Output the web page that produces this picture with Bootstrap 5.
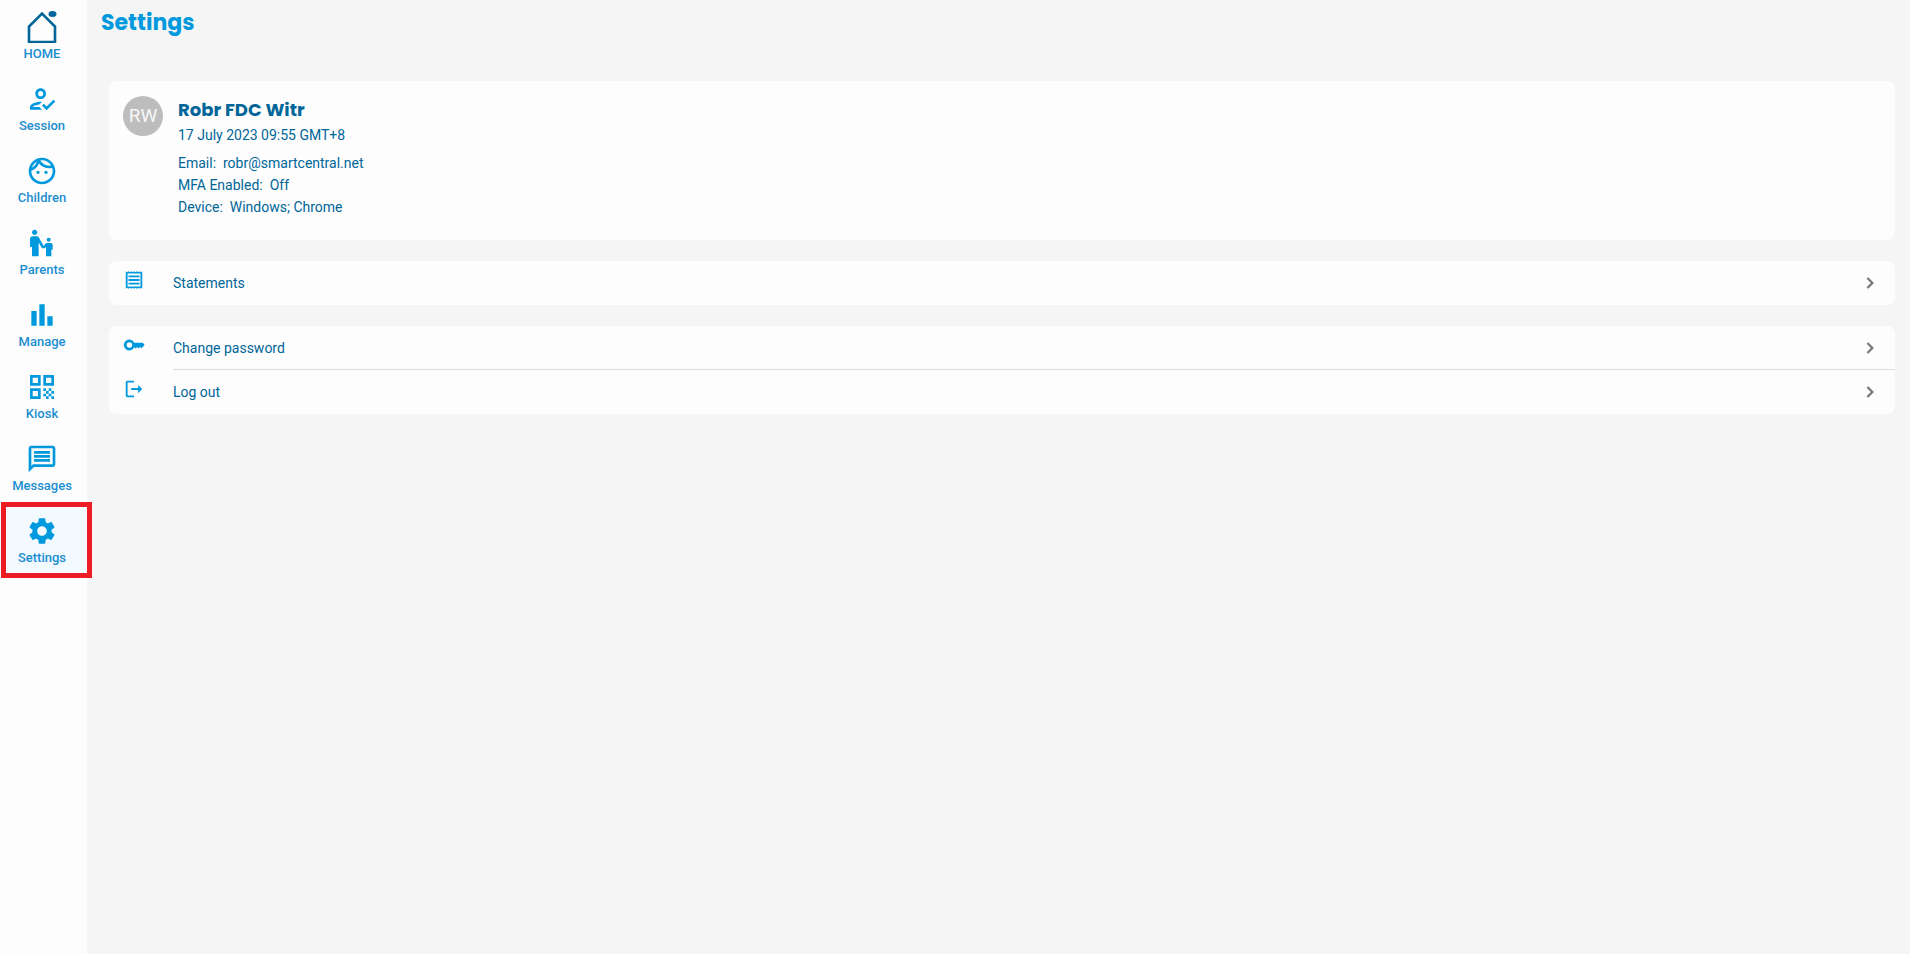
<!DOCTYPE html>
<html lang="en">
<head>
<meta charset="utf-8">
<meta name="viewport" content="width=device-width, initial-scale=1">
<title>Settings</title>
<link href="https://cdn.jsdelivr.net/npm/bootstrap@5.3.0/dist/css/bootstrap.min.css" rel="stylesheet">
<style>
  :root { --brand: #0099dd; --brand-dark: #006699; --link: #1a8ed1; --surface: #fdfdfd; }
  body { background: #f5f5f5; color: var(--brand-dark); font-family: Roboto, "Liberation Sans", sans-serif; font-size: 14px; line-height: 22px; }
  .side-rail { width: 87px; background: var(--surface); }
  .rail-link { height: 72px; padding: 11px 3px 0 0; gap: 3px; color: var(--link); font-size: 13px; font-weight: 500; line-height: 16px; text-decoration: none; }
  .rail-link svg { width: 32px; height: 32px; fill: var(--brand); }
  .rail-link.active { background: #f2f9ff; }
  .active-frame { position: absolute; inset: -2px -5px -2px 1px; border: 5px solid #ed1c24; pointer-events: none; }
  .title-font { font-family: Poppins, Inter, sans-serif; font-weight: 700; }
  .page-title { color: var(--brand); font-size: 22px; line-height: 28px; padding: 9px 14px 0; }
  .page-body { padding: 44px 15px 24px 22px; gap: 21px; }
  .panel { background: var(--surface); border-radius: 8px; }
  .profile { padding: 15px 14px 22px; gap: 15px; }
  .avatar { width: 40px; height: 40px; background: #bdbdbd; color: #f7f7f7; font-size: 19px; }
  .profile-name { font-size: 18px; line-height: 28px; }
  .profile-date { margin-bottom: 6px; }
  .row-link { height: 44px; padding-left: 14px; color: var(--brand-dark); text-decoration: none; }
  .row-link .lead-icon { width: 22px; height: 22px; margin: 8px 28px 0 0; fill: var(--brand); }
  .row-label { padding-right: 14px; }
  .row-label .chevron { width: 22px; height: 22px; fill: #757575; stroke: #757575; stroke-width: .5; }
  .row-divided { border-bottom: 1px solid #dcdcdc; }
</style>
</head>
<body>
<div class="d-flex min-vh-100">
  <nav class="side-rail flex-shrink-0 d-flex flex-column" aria-label="Main">
    <a class="rail-link d-flex flex-column align-items-center" href="#"><svg viewBox="0 0 32 32" aria-hidden="true"><path d="M3 31V15.500L16 2.500l13 13V31z" fill="none" stroke="#006699" stroke-width="2.600"/><ellipse cx="26.500" cy="3" rx="4" ry="3" fill="#006699"/></svg>HOME</a>
    <a class="rail-link d-flex flex-column align-items-center" href="#"><svg viewBox="0 0 24 24" aria-hidden="true"><path d="M11 12c2.210 0 4-1.790 4-4s-1.790-4-4-4-4 1.790-4 4 1.790 4 4 4zM11 6c1.100 0 2 .9 2 2s-.9 2-2 2-2-.9-2-2 .9-2 2-2zM5 18c.2-.63 2.570-1.680 4.960-1.940l2.040-2C11.610 14.020 11.320 14 11 14c-2.670 0-8 1.340-8 4v2h9l-2-2H5zM20.600 12.500l-5.130 5.170-2.070-2.080L12 17l3.470 3.500L22 13.910z"/></svg>Session</a>
    <a class="rail-link d-flex flex-column align-items-center" href="#"><svg viewBox="0 0 24 24" aria-hidden="true"><path d="M10.250 13c0 .69-.56 1.250-1.250 1.250S7.750 13.690 7.750 13s.56-1.250 1.250-1.250 1.250.56 1.250 1.250zM15 11.750c-.69 0-1.250.56-1.250 1.250s.56 1.250 1.250 1.250 1.250-.56 1.250-1.250-.56-1.250-1.250-1.250zm7 .25c0 5.520-4.480 10-10 10S2 17.520 2 12 6.480 2 12 2s10 4.480 10 10zM10.660 4.120C12.060 6.440 14.600 8 17.500 8c.46 0 .91-.05 1.340-.12C17.440 5.560 14.900 4 12 4c-.46 0-.91.05-1.340.12zM4.420 9.470c1.710-.97 3.030-2.550 3.660-4.440C6.370 6 5.050 7.580 4.420 9.470zM20 12c0-.78-.12-1.530-.33-2.240-.7.15-1.420.24-2.170.24-3.130 0-5.920-1.440-7.760-3.690C8.690 8.870 6.600 10.880 4 11.860c.01.04 0 .09 0 .14 0 4.420 3.580 8 8 8s8-3.580 8-8z"/></svg>Children</a>
    <a class="rail-link d-flex flex-column align-items-center" href="#"><svg viewBox="0 0 24 24" aria-hidden="true"><path d="M6.500 2c1.100 0 2 .9 2 2s-.9 2-2 2-2-.9-2-2 .9-2 2-2zM15.500 9.500c0 .83.67 1.500 1.500 1.500s1.500-.67 1.500-1.500S17.830 8 17 8s-1.500.67-1.500 1.500zM18.500 12h-2.840c-.58.01-1.140.32-1.450.86l-.92 1.320L9.720 8C9.350 7.370 8.690 7.010 8.010 7H5C3.900 7 3 7.900 3 9v6h1.500v7h5V11.610L12.030 16h2.200L15 14.900V22h4v-5h1v-3.500c0-.82-.67-1.500-1.500-1.500z"/></svg>Parents</a>
    <a class="rail-link d-flex flex-column align-items-center" href="#"><svg viewBox="0 0 24 24" aria-hidden="true"><path d="M4 9h4v11H4zm12 4h4v7h-4zm-6-9h4v16h-4z"/></svg>Manage</a>
    <a class="rail-link d-flex flex-column align-items-center" href="#"><svg viewBox="0 0 24 24" aria-hidden="true"><path d="M3 11h8V3H3v8zm2-6h4v4H5V5zM3 21h8v-8H3v8zm2-6h4v4H5v-4zM13 3v8h8V3h-8zm6 6h-4V5h4v4zM19 19h2v2h-2zM13 13h2v2h-2zM15 15h2v2h-2zM13 17h2v2h-2zM15 19h2v2h-2zM17 17h2v2h-2zM17 13h2v2h-2zM19 15h2v2h-2z"/></svg>Kiosk</a>
    <a class="rail-link d-flex flex-column align-items-center" href="#"><svg viewBox="0 0 24 24" aria-hidden="true"><path d="M20 2H4c-1.100 0-2 .9-2 2v18l4-4h14c1.100 0 2-.9 2-2V4c0-1.100-.9-2-2-2zm0 14H5.170L4 17.170V4h16v12zM6 12h12v2H6zm0-3h12v2H6zm0-3h12v2H6z"/></svg>Messages</a>
    <a class="rail-link active position-relative d-flex flex-column align-items-center" href="#" aria-current="page"><svg viewBox="0 0 24 24" aria-hidden="true"><path d="M19.140 12.940c.04-.3.06-.61.06-.94 0-.32-.02-.64-.07-.94l2.030-1.580c.18-.14.23-.41.12-.61l-1.920-3.320c-.12-.22-.37-.29-.59-.22l-2.390.96c-.5-.38-1.030-.7-1.620-.94l-.36-2.540c-.04-.24-.24-.41-.48-.41h-3.840c-.24 0-.43.17-.47.41l-.36 2.540c-.59.24-1.130.57-1.620.94l-2.390-.96c-.22-.08-.47 0-.59.22L2.740 8.870c-.12.21-.08.47.12.61l2.030 1.580c-.05.3-.09.63-.09.94s.02.64.07.94l-2.030 1.580c-.18.14-.23.41-.12.61l1.920 3.320c.12.22.37.29.59.22l2.390-.96c.5.38 1.030.7 1.620.94l.36 2.540c.05.24.24.41.48.41h3.840c.24 0 .44-.17.47-.41l.36-2.540c.59-.24 1.130-.56 1.620-.94l2.390.96c.22.08.47 0 .59-.22l1.920-3.320c.12-.22.07-.47-.12-.61l-2.010-1.580zM12 15.600c-1.980 0-3.600-1.620-3.600-3.600s1.620-3.600 3.600-3.600 3.600 1.620 3.600 3.600-1.620 3.600-3.600 3.600z"/></svg>Settings<span class="active-frame"></span></a>
  </nav>
  <main class="flex-grow-1">
    <h1 class="page-title title-font m-0">Settings</h1>
    <div class="page-body d-flex flex-column">
      <section class="panel profile d-flex align-items-start">
        <div class="avatar rounded-circle d-flex align-items-center justify-content-center flex-shrink-0">RW</div>
        <div>
          <h2 class="profile-name title-font m-0">Robr FDC Witr</h2>
          <p class="profile-date">17 July 2023 09:55 GMT+8</p>
          <div>Email:&nbsp; robr@smartcentral.net</div>
          <div>MFA Enabled:&nbsp; Off</div>
          <div>Device:&nbsp; Windows; Chrome</div>
        </div>
      </section>
      <section class="panel">
        <a class="row-link d-flex" href="#"><svg class="lead-icon flex-shrink-0" viewBox="0 0 24 24" aria-hidden="true"><path d="M3 2.500l1.500 1L6 2.500l1.500 1L9 2.500l1.500 1 1.500-1 1.500 1 1.500-1 1.500 1 1.500-1 1.500 1 1.500-1v19l-1.500-1-1.500 1-1.500-1-1.500 1-1.500-1-1.500 1-1.500-1-1.500 1-1.500-1-1.500 1-1.500-1-1.500 1zM5 5v14h14V5z" fill-rule="evenodd"/><path d="M6 7h12v2H6zm0 4h12v2H6zm0 4h12v2H6z"/></svg><span class="row-label flex-grow-1 d-flex align-items-center justify-content-between">Statements<svg class="chevron" viewBox="0 0 24 24" aria-hidden="true"><path d="M10 6L8.590 7.410 13.170 12l-4.580 4.590L10 18l6-6z"/></svg></span></a>
      </section>
      <section class="panel">
        <a class="row-link d-flex" href="#"><svg class="lead-icon flex-shrink-0" viewBox="0 0 24 24" aria-hidden="true"><path d="M12.300 9.500H21.500l2 2.300-3 3.700-2-1.300-1.500 1.600-1.600-1.600-1.500 1.600-1.600-1.300A6 6 0 1 1 12.300 9.500zM7 9a3 3 0 1 0 0 6 3 3 0 0 0 0-6z" fill-rule="evenodd"/></svg><span class="row-label row-divided flex-grow-1 d-flex align-items-center justify-content-between">Change password<svg class="chevron" viewBox="0 0 24 24" aria-hidden="true"><path d="M10 6L8.590 7.410 13.170 12l-4.580 4.590L10 18l6-6z"/></svg></span></a>
        <a class="row-link d-flex" href="#"><svg class="lead-icon flex-shrink-0" viewBox="0 0 24 24" aria-hidden="true"><path d="M12 5V3H5c-1.100 0-2 .9-2 2v14c0 1.100.9 2 2 2h7v-2H5V5zM21 12l-4.500-4.500v3.500H9v2h7.500v3.500z"/></svg><span class="row-label flex-grow-1 d-flex align-items-center justify-content-between">Log out<svg class="chevron" viewBox="0 0 24 24" aria-hidden="true"><path d="M10 6L8.590 7.410 13.170 12l-4.580 4.590L10 18l6-6z"/></svg></span></a>
      </section>
    </div>
  </main>
</div>
<script src="https://cdn.jsdelivr.net/npm/bootstrap@5.3.0/dist/js/bootstrap.bundle.min.js"></script>
</body>
</html>
